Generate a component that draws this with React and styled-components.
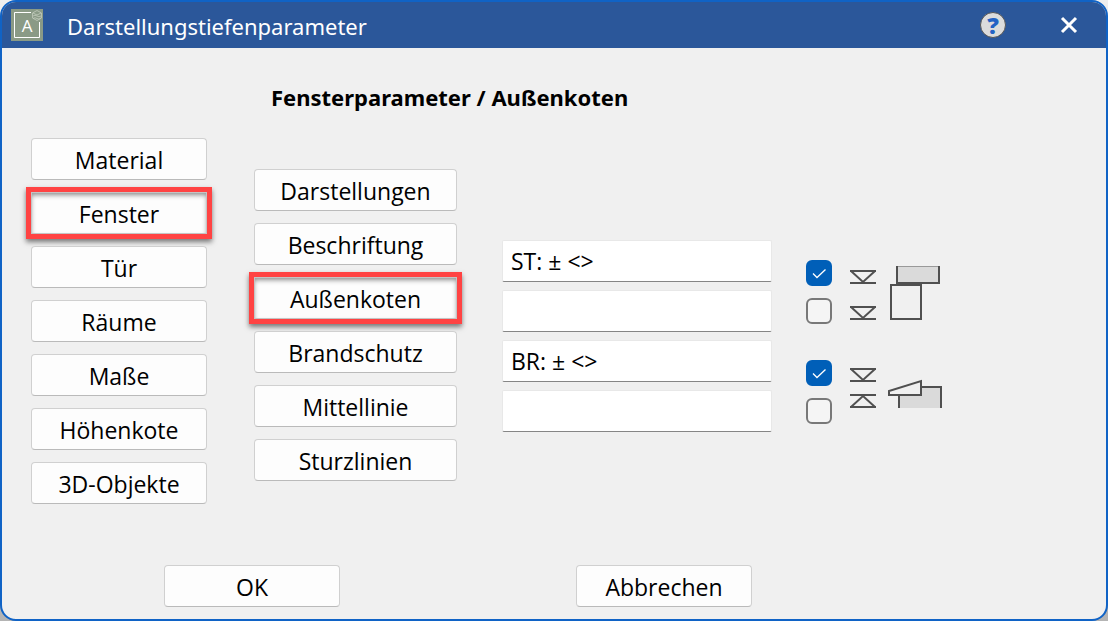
import React, { useState } from "react";
import styled, { createGlobalStyle } from "styled-components";

const GlobalStyle = createGlobalStyle`
    * {
        box-sizing: border-box;
    }
    body {
        margin: 0;
        background: linear-gradient(#eeeeee, #b4b4b4);
        color: #000;
        font-family: "Open Sans", "Noto Sans", sans-serif;
        font-size: 23px;
        line-height: 32px;
    }
    button, input {
        font: inherit;
        color: inherit;
    }
`;

const Dialog = styled.main`
    min-height: 100vh;
    display: flex;
    flex-direction: column;
    overflow: hidden;
    border: 2px solid #1063c6;
    border-radius: 16px;
    background: #f0f0f0;
`;

const TitleBar = styled.header`
    height: 46px;
    padding: 0 26px 0 9px;
    display: flex;
    align-items: center;
    background: #2b579a;
    color: #fff;
`;

const Title = styled.h1`
    flex: 1;
    margin: 0 0 0 24px;
    padding-top: 2px;
    font-family: "Noto Sans", "Open Sans", sans-serif;
    font-size: 22px;
    font-weight: 400;
`;

const HelpButton = styled.button`
    width: 26px;
    height: 26px;
    margin-right: 52px;
    padding: 0;
    border: 1px solid #555;
    border-radius: 50%;
    background: #dcdcdc;
    color: #2463c4;
    font-size: 23px;
    font-weight: 800;
    line-height: 22px;
`;

const CloseButton = styled.button`
    width: 22px;
    height: 22px;
    padding: 0;
    display: grid;
    place-items: center;
    border: none;
    background: none;
`;

const Body = styled.div`
    flex: 1;
    padding: 33px 163px 12px 29px;
`;

const Heading = styled.h2`
    margin: 0 0 25px 240px;
    font-family: "Noto Sans", "Open Sans", sans-serif;
    font-size: 22px;
    font-weight: 700;
`;

const Columns = styled.div`
    display: grid;
    grid-template-columns: 176px 203px 1fr 171px;
    align-items: start;
`;

const Menu = styled.nav`
    display: flex;
    flex-direction: column;
    gap: 12px;
`;

const SubMenu = styled(Menu)`
    width: 203px;
    margin: 31px 0 0 47px;
`;

const Button = styled.button`
    width: 100%;
    height: 42px;
    padding: 2px 0 0;
    border: 1px solid #d0d0d0;
    border-bottom-color: #bababa;
    border-radius: 4px;
    background: #fdfdfd;
`;

const MenuButton = styled(Button)`
    ${props => props.$active && `
        border: none;
        border-radius: 0;
        box-shadow:
            0 0 0 5px #ff4343,
            0 3px 5px 5px rgba(0, 0, 0, 0.5),
            inset 0 0 0 1px #c4c4c4,
            inset 0 3px 5px rgba(0, 0, 0, 0.45);
    `}
`;

const Fields = styled.div`
    margin: 102px 0 0 92px;
    display: flex;
    flex-direction: column;
    gap: 8px;
`;

const TextInput = styled.input`
    width: 100%;
    height: 42px;
    padding: 0 8px;
    border: 1px solid #e8e8e8;
    border-bottom-color: #868686;
    border-radius: 2px;
    background: #fff;
    outline: none;
`;

const Options = styled.div`
    margin: 122px 0 0 34px;
    display: flex;
    flex-direction: column;
    gap: 36px;
`;

const OptionGroup = styled.div`
    display: flex;
    gap: 18px;
`;

const Checks = styled.div`
    display: flex;
    flex-direction: column;
    gap: 12px;
`;

const CheckLabel = styled.label`
    display: grid;
    width: 26px;
    height: 26px;

    > * {
        grid-area: 1 / 1;
    }
`;

const CheckInput = styled.input`
    appearance: none;
    width: 26px;
    height: 26px;
    margin: 0;
    border: 2px solid #787878;
    border-radius: 6px;
    background: #f5f5f5;

    &:checked {
        border-color: #005fb8;
        background: #005fb8;
    }
`;

const Tick = styled.svg`
    pointer-events: none;
`;

const Drawing = styled.svg`
    flex: none;
    fill: none;
    stroke: #505050;
    stroke-width: 2;
`;

const Footer = styled.footer`
    margin: 61px 191px 0 133px;
    display: flex;
    justify-content: space-between;
`;

const FooterButton = styled(Button)`
    width: 176px;
`;

const AppIcon = () => (
  <svg width="32" height="32" viewBox="0 0 32 32" fill="none" stroke="#fff">
    <rect width="32" height="32" fill="#8a9a86" stroke="none" />
    <path d="M20 3.5H3.5V28.5H28.5V13" />
    <path d="M26 1.5L30.5 4V9L26 11.5L21.5 9V4Z" stroke="#c3cbbd" strokeWidth="0.8" />
    <path d="M22 4l4 2 4-2M22 7q2-1.500 4 0t4 0M22 9.500q2-1.500 4 0t4-.5" stroke="#c3cbbd" strokeWidth="0.8" />
    <text x="16" y="23" fill="#fff" stroke="none" fontSize="17" textAnchor="middle">A</text>
  </svg>
);

// lintel above the window, seen from the side
const LintelDrawing = () => (
  <Drawing width="93" height="64" viewBox="0 0 93 64">
    <path d="M0 11H26M1 11L13 22L25 11M0 23H26" />
    <path d="M0 47H26M1 47L13 58L25 47M0 59H26" />
    <rect x="47" y="6" width="42" height="17" fill="#dadada" stroke="none" />
    <path d="M47 6.500H89" stroke="#999" strokeWidth="1" />
    <path d="M47 6V23H89V6" />
    <rect x="41" y="25" width="30" height="34" fill="#f0f0f0" />
  </Drawing>
);

// sloping sill on top of the parapet
const SillDrawing = () => (
  <Drawing width="93" height="64" viewBox="0 0 93 64">
    <path d="M0 9H26M1 9L13 20L25 9M0 21H26" />
    <path d="M0 35H26M1 47L13 36L25 47M0 47H26" />
    <path d="M49 48V35H71V27H91V48" fill="#dadada" />
    <path d="M39 35V31L71 21V35Z" fill="#f0f0f0" />
  </Drawing>
);

const Check = ({ label, defaultChecked = false }) => {
  const [checked, setChecked] = useState(defaultChecked);
  return (
    <CheckLabel>
      <CheckInput
        type="checkbox"
        aria-label={label}
        checked={checked}
        onChange={() => setChecked(!checked)}
      />
      {checked && (
        <Tick width="26" height="26" fill="none" stroke="#fff" strokeWidth="1.3">
          <path d="M7 13.500L11 17.500L19.500 9.500" />
        </Tick>
      )}
    </CheckLabel>
  );
};

const menuItems = ["Material", "Fenster", "Tür", "Räume", "Maße", "Höhenkote", "3D-Objekte"];
const subMenuItems = [
  "Darstellungen",
  "Beschriftung",
  "Außenkoten",
  "Brandschutz",
  "Mittellinie",
  "Sturzlinien"
];
const fields = [
  { label: "Sturz", value: "ST: ± <>" },
  { label: "Sturz, zweite Zeile", value: "" },
  { label: "Brüstung", value: "BR: ± <>" },
  { label: "Brüstung, zweite Zeile", value: "" }
];

export default () => {
  const [menu, setMenu] = useState("Fenster");
  const [subMenu, setSubMenu] = useState("Außenkoten");

  return (
    <>
      <GlobalStyle />
      <Dialog>
        <TitleBar>
          <AppIcon />
          <Title>Darstellungstiefenparameter</Title>
          <HelpButton type="button" aria-label="Hilfe">?</HelpButton>
          <CloseButton type="button" aria-label="Schließen">
            <svg width="18" height="18" stroke="#fff" strokeWidth="3">
              <path d="M2 2L16 16M16 2L2 16" />
            </svg>
          </CloseButton>
        </TitleBar>
        <Body>
          <Heading>Fensterparameter / Außenkoten</Heading>
          <Columns>
            <Menu>
              {menuItems.map(item => (
                <MenuButton
                  key={item}
                  type="button"
                  $active={item === menu}
                  onClick={() => setMenu(item)}
                >
                  {item}
                </MenuButton>
              ))}
            </Menu>
            <SubMenu>
              {subMenuItems.map(item => (
                <MenuButton
                  key={item}
                  type="button"
                  $active={item === subMenu}
                  onClick={() => setSubMenu(item)}
                >
                  {item}
                </MenuButton>
              ))}
            </SubMenu>
            <Fields>
              {fields.map(field => (
                <TextInput
                  key={field.label}
                  type="text"
                  aria-label={field.label}
                  defaultValue={field.value}
                />
              ))}
            </Fields>
            <Options>
              <OptionGroup>
                <Checks>
                  <Check label="Sturz oben" defaultChecked />
                  <Check label="Sturz unten" />
                </Checks>
                <LintelDrawing />
              </OptionGroup>
              <OptionGroup>
                <Checks>
                  <Check label="Brüstung oben" defaultChecked />
                  <Check label="Brüstung unten" />
                </Checks>
                <SillDrawing />
              </OptionGroup>
            </Options>
          </Columns>
          <Footer>
            <FooterButton type="button">OK</FooterButton>
            <FooterButton type="button">Abbrechen</FooterButton>
          </Footer>
        </Body>
      </Dialog>
    </>
  );
};
